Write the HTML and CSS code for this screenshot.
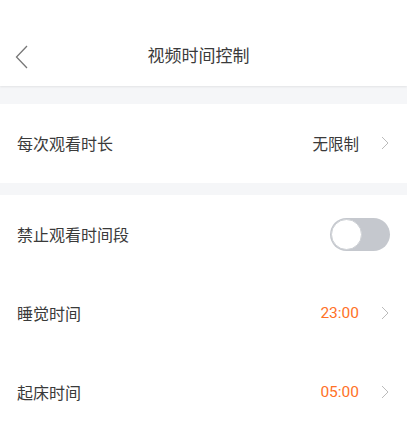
FILE: index.html
```html
<!DOCTYPE html>
<html lang="zh">
<head>
<meta charset="utf-8">
<link rel="stylesheet" href="styles.css">
</head>
<body>
<div class="page">
  <header class="nav">
    <span class="back">
      <svg width="14" height="24" viewBox="0 0 14 24"><path d="M12 1 L1.5 12 L12 23" fill="none" stroke="#777" stroke-width="1.3"/></svg>
    </span>
    <h1 class="title">视频时间控制</h1>
  </header>
  <div class="gap gap-top"></div>
  <div class="row">
    <span class="label">每次观看时长</span>
    <span class="right"><span class="value">无限制</span><svg class="chev" width="8" height="14" viewBox="0 0 8 14"><path d="M1 1 L7 7 L1 13" fill="none" stroke="#bbb" stroke-width="1"/></svg></span>
  </div>
  <div class="gap"></div>
  <div class="row">
    <span class="label">禁止观看时间段</span>
    <span class="toggle"><span class="knob"></span></span>
  </div>
  <div class="row">
    <span class="label">睡觉时间</span>
    <span class="right"><span class="value orange">23:00</span><svg class="chev" width="8" height="14" viewBox="0 0 8 14"><path d="M1 1 L7 7 L1 13" fill="none" stroke="#bbb" stroke-width="1"/></svg></span>
  </div>
  <div class="row">
    <span class="label">起床时间</span>
    <span class="right"><span class="value orange">05:00</span><svg class="chev" width="8" height="14" viewBox="0 0 8 14"><path d="M1 1 L7 7 L1 13" fill="none" stroke="#bbb" stroke-width="1"/></svg></span>
  </div>
</div>
</body>
</html>
```
FILE: styles.css
```css
html, body {
  margin: 0;
  padding: 0;
  background: #fff;
}
body {
  font-family: "Noto Sans CJK SC", "Noto Sans", sans-serif;
  color: #333;
}
.page {
  width: 407px;
}
.nav {
  height: 86px;
  display: flex;
  align-items: flex-end;
  justify-content: center;
  position: relative;
  background: #fff;
  box-shadow: 0 1px 2px rgba(0,0,0,0.08);
  z-index: 1;
}
.back {
  position: absolute;
  left: 15px;
  top: 45px;
  display: flex;
}
.title {
  margin: 0 10px 20px 0;
  font-size: 17px;
  font-weight: 400;
  line-height: 22px;
  color: #3a3a3a;
}
.gap {
  height: 12px;
  background: #f5f6f8;
}
.gap-top {
  height: 18px;
}
.row {
  height: 79px;
  display: flex;
  align-items: center;
  justify-content: space-between;
  padding: 0 17px 2px;
  box-sizing: border-box;
  background: #fff;
}
.label {
  font-size: 16px;
  line-height: 22px;
  color: #3a3a3a;
}
.right {
  display: flex;
  align-items: center;
}
.value {
  font-size: 15.5px;
  line-height: 22px;
  color: #3a3a3a;
}
.orange {
  color: #ff7126;
  font-family: Roboto, "Noto Sans", sans-serif;
}
.chev {
  margin-left: 22px;
  margin-right: 1px;
}
.toggle {
  width: 60px;
  height: 33px;
  margin-top: 2px;
  border-radius: 17px;
  background: #c5c8ce;
  display: flex;
  align-items: center;
  padding: 0 1px;
  box-sizing: border-box;
}
.knob {
  width: 31px;
  height: 31px;
  border-radius: 50%;
  background: #fff;
  box-sizing: border-box;
  border: 1px solid #cfd2d6;
}
```
